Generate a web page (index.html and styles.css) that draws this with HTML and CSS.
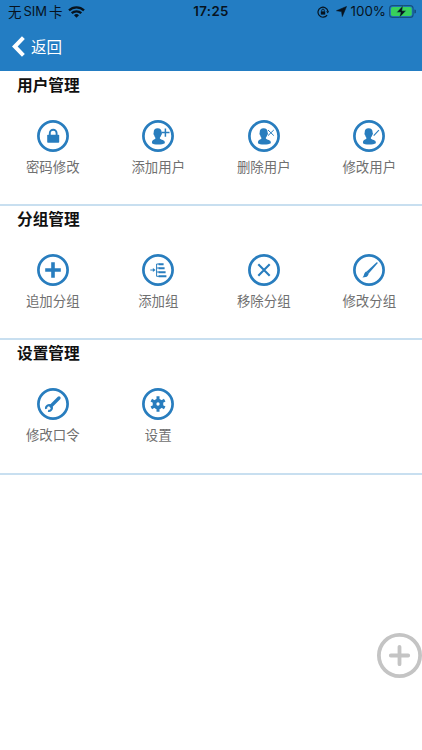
FILE: index.html
```html
<!DOCTYPE html>
<html lang="zh-CN">
<head>
  <meta charset="UTF-8" />
  <meta name="viewport" content="width=device-width, initial-scale=1.0" />
  <title>用户管理</title>
  <link rel="stylesheet" href="styles.css">
</head>
<body>
  <header>
    <div class="status">
      <div class="carrier">
        <span>无</span><span class="sim">SIM</span><span>卡</span>
        <svg class="wifi" width="17" height="12" viewBox="0 0 17 12" fill="none" stroke="#07131e" stroke-width="2.3">
          <path d="M1 4.4a10.8 10.8 0 0 1 15 0M3.7 7.2a7 7 0 0 1 9.6 0"/>
          <path d="M8.500 11.800 L6 9.300a3.600 3.600 0 0 1 5 0z" fill="#07131e" stroke="none"/>
        </svg>
      </div>
      <div class="clock">17:25</div>
      <div class="power">
        <svg class="lock" width="12" height="12" viewBox="0 0 12 12" fill="none" stroke="#07131e">
          <path d="M10.100 9.100A5 5 0 1 1 10.900 5.200" stroke-width="1.200"/>
          <path d="M9.200 5.200h3l-1.500 2.200z" fill="#07131e" stroke="none"/>
          <path d="M3.800 5.400h4.400v3.200H3.800z" fill="#07131e" stroke="none"/>
          <path d="M4.700 5.600V4.400a1.300 1.300 0 0 1 2.600 0v1.200" stroke-width=".9"/>
        </svg>
        <svg class="arrow" width="11" height="11" viewBox="0 0 11 11"><path d="M10.500.5 6.300 10.500 5.600 5.500.5 4.700z" fill="#07131e" stroke="#07131e" stroke-width=".6" stroke-linejoin="round"/></svg>
        <span class="percent">100%</span>
        <svg class="battery" width="27" height="13" viewBox="0 0 27 13">
          <rect x=".6" y=".6" width="23.500" height="11.800" rx="3" fill="none" stroke="#15507f" stroke-width="1.100"/>
          <rect x="2" y="2" width="20.700" height="9" rx="1.800" fill="#38d15c"/>
          <path d="M25.300 4.500v4a2 2 0 0 0 0-4z" fill="#15507f"/>
          <path d="M14 .6 7.800 7.200h3.900L10.500 12.400 16.900 5.800H13z" fill="#07131e" stroke="#2aa56b" stroke-width=".4"/>
        </svg>
      </div>
    </div>
    <div class="nav">
      <svg width="13" height="21" viewBox="0 0 13 21"><path d="M11.400 1.600 2.800 10.500l8.600 8.900" fill="none" stroke="#fff" stroke-width="4"/></svg>
      <span>返回</span>
    </div>
  </header>

  <svg class="defs" width="0" height="0">
    <symbol id="ring" viewBox="0 0 32 32">
      <circle class="line" cx="16" cy="16" r="14.600" stroke-width="2.700"/>
    </symbol>
    <symbol id="person" viewBox="0 0 32 32">
      <path d="M15.600 8.300c2.600 0 4 1.600 4 3.900 0 .6.500.8.300 1.800-.2.800-.6 1-.8 1.500-.3 1.200-.9 1.700-1.200 2.100v1.200c1.300 1 4.900 1.300 4.900 3.300v1.200c-1.200.8-3.600 1.200-6.700 1.200s-5.500-.4-6.100-1.200c-.1-3 .7-3.300 3.300-4.300V17.600c-.4-.5-.8-1-1-2.100-.3-.4-.7-.6-.8-1.400-.1-.9.200-1.200.2-1.900 0-2.300 1.300-3.900 3.900-3.900z"/>
    </symbol>
  </svg>

  <section>
    <h2>用户管理</h2>
    <div class="grid">
      <a class="item">
        <svg class="icon" viewBox="0 0 32 32">
          <use href="#ring"/>
          <rect x="10.200" y="14.800" width="12" height="8" rx=".8"/>
          <path class="line" d="M12.800 15v-1.900a3.400 3.400 0 0 1 6.800 0V15" stroke-width="1.900"/>
        </svg>
        <span>密码修改</span>
      </a>
      <a class="item">
        <svg class="icon" viewBox="0 0 32 32">
          <use href="#ring"/>
          <use href="#person"/>
          <path class="line" d="M19.300 12.600h8.200M23.400 8.500v8.200" stroke-width="1.500"/>
        </svg>
        <span>添加用户</span>
      </a>
      <a class="item">
        <svg class="icon" viewBox="0 0 32 32">
          <use href="#ring"/>
          <use href="#person"/>
          <path class="line" d="m20 10 5.800 5.600M25.800 10 20 15.600" stroke-width="1"/>
        </svg>
        <span>删除用户</span>
      </a>
      <a class="item">
        <svg class="icon" viewBox="0 0 32 32">
          <use href="#ring"/>
          <use href="#person"/>
          <path class="line" d="m20.700 15.600 5.200-5.500" stroke-width="1.100"/>
        </svg>
        <span>修改用户</span>
      </a>
    </div>
  </section>

  <section>
    <h2>分组管理</h2>
    <div class="grid">
      <a class="item">
        <svg class="icon" viewBox="0 0 32 32">
          <use href="#ring"/>
          <path class="line" d="M8.200 16h15.600M16 8.200v15.600" stroke-width="3.600"/>
        </svg>
        <span>追加分组</span>
      </a>
      <a class="item">
        <svg class="icon" viewBox="0 0 32 32">
          <use href="#ring"/>
          <path class="line" d="M8.300 16h3.500M17.500 10h-2.900v12.300h2.900M14.600 14h3M14.600 18h3" stroke-width="1"/>
          <path d="m10.900 13.900 2.700 2.100-2.700 2.100z"/>
          <path class="line" d="M16.600 10.200h5M16.600 14.200h6M16.600 18.200h7M16.600 22.200h7.800" stroke-width="1.900"/>
        </svg>
        <span>添加组</span>
      </a>
      <a class="item">
        <svg class="icon" viewBox="0 0 32 32">
          <use href="#ring"/>
          <path class="line" d="m10.300 10.300 11.400 11.400M21.700 10.300 10.300 21.700" stroke-width="2.100"/>
        </svg>
        <span>移除分组</span>
      </a>
      <a class="item">
        <svg class="icon" viewBox="0 0 32 32">
          <use href="#ring"/>
          <path d="M23.400 8.500c.9-.5 1.600.3 1 1.100L15.500 19.700l-2.100-2z"/>
          <path d="m13.200 17.400 2.500 2.400c-.6 1.900-1.500 2.900-2.900 3.300-1.100.3-2.300.2-3.400.5 1.100-1 1.300-1.900 1.700-3.300.3-1 1.100-2.300 2.100-2.900z"/>
        </svg>
        <span>修改分组</span>
      </a>
    </div>
  </section>

  <section>
    <h2>设置管理</h2>
    <div class="grid">
      <a class="item">
        <svg class="icon" viewBox="0 0 32 32">
          <use href="#ring"/>
          <path class="line" d="m14 18 8-8" stroke-width="3.300" stroke-linecap="round"/>
          <path class="line" d="M9.200 20.900a2.900 2.900 0 0 1 4.800-2.900 2.900 2.900 0 0 1-2.900 4.800" stroke-width="2.200"/>
        </svg>
        <span>修改口令</span>
      </a>
      <a class="item">
        <svg class="icon" viewBox="0 0 32 32">
          <use href="#ring"/>
          <circle class="line" cx="16" cy="16" r="3.500" stroke-width="3.700"/>
          <path class="line" d="M16 12V8.300M16 20v3.700M12.500 14l-3.200-1.900M19.500 18l3.200 1.900M12.500 18l-3.200 1.900M19.500 14l3.200-1.900" stroke-width="3"/>
        </svg>
        <span>设置</span>
      </a>
    </div>
  </section>

  <button class="add">
    <svg width="45" height="45" viewBox="0 0 45 45" fill="none" stroke="#c4c4c4">
      <circle cx="22.500" cy="22.500" r="20.600" stroke-width="3.800"/>
      <path d="M13.800 22.500h17.400M22.500 13.800v17.400" stroke-width="3.800" stroke-linecap="round"/>
    </svg>
  </button>
</body>
</html>
```

FILE: styles.css
```css
*{box-sizing:border-box}
body{margin:0;min-height:100vh;background:#fff;font-family:"Noto Sans CJK SC",sans-serif}
header{height:71px;margin-bottom:1px;background:#237dc3;color:#fff}

.status{display:grid;grid-template-columns:1fr auto 1fr;align-items:center;height:23px;padding:0 6px 0 8px;color:#07131e;font-size:13.5px;line-height:23px}
.carrier{display:flex;align-items:center}
.sim{margin:0 2px;font-family:Inter,sans-serif;font-size:13px}
.wifi{margin-left:5px}
.clock{margin-left:-2px;font:600 13.3px/23px Inter,sans-serif;letter-spacing:.35px}
.power{display:flex;align-items:center;justify-content:flex-end}
.arrow{margin:0 4px 0 7px}
.percent{font-family:Inter,sans-serif;font-size:13.4px}
.battery{margin-left:3px}

.nav{display:flex;align-items:center;gap:6px;height:47px;padding-left:12px;font-size:15.5px;line-height:46px}
.nav span{margin-top:-1px}

section{height:134.2px;border-bottom:2px solid #c8dff0}
h2{margin:0;padding-left:17px;font-size:15.7px;font-weight:700;line-height:25px;color:#111}
.grid{display:grid;grid-template-columns:repeat(4,1fr);padding-top:23px}
.item{display:flex;flex-direction:column;align-items:center;color:#707070;font-size:13.4px;line-height:20px}
.item span{margin-top:4px}
.icon{width:32px;height:32px;fill:#287dbe}
.line{fill:none;stroke:#287dbe}
.defs{position:absolute}

.add{position:fixed;right:0;bottom:72px;width:45px;height:45px;padding:0;border:0;background:none}
.add svg{display:block}
```
